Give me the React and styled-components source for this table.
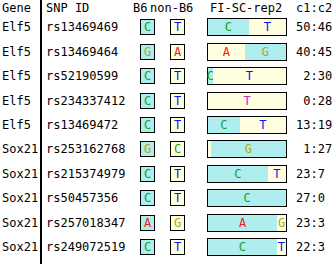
import React from 'react';
import styled, { createGlobalStyle } from 'styled-components';

const Global = createGlobalStyle`
  html, body {
    margin: 0;
    padding: 0;
    background: #ffffff;
  }
  body {
    font-family: 'DejaVu Sans Mono', 'Liberation Mono', monospace;
    font-size: 12px;
    color: #000000;
    overflow: hidden;
  }
`;

const B6_FILL = '#afeeee';
const ALT_FILL = '#ffffe0';

const BASE_COLORS = {
  A: '#ee1c24',
  C: '#16a016',
  G: '#b4a414',
  T: '#1010f0',
};

const Table = styled.div`
  display: flex;
  flex-direction: column;
  width: 332px;
  height: 264px;
  overflow: hidden;
`;

const Row = styled.div`
  display: flex;
  align-items: center;
  flex: none;
  height: ${(p) => p.$h}px;
  white-space: pre;
`;

const Filler = styled.div`
  display: flex;
  flex: 1;
`;

const GeneCell = styled.div`
  display: flex;
  align-items: center;
  align-self: stretch;
  flex: none;
  width: 38px;
  padding-left: 2px;
  border-right: 2px solid #000000;
`;

const Cell = styled.div`
  display: flex;
  align-items: center;
  flex: ${(p) => (p.$w ? 'none' : '1')};
  width: ${(p) => (p.$w ? `${p.$w}px` : 'auto')};
  padding-left: ${(p) => p.$pl || 0}px;
`;

const Box = styled.div`
  display: flex;
  align-items: center;
  justify-content: center;
  box-sizing: border-box;
  width: 15px;
  height: 16px;
  border: 1px solid #000000;
  background: ${(p) => p.$fill};
  color: ${(p) => BASE_COLORS[p.$base]};
`;

const Bar = styled.div`
  display: flex;
  box-sizing: border-box;
  width: 80px;
  height: 18px;
  border: 1px solid #000000;
`;

const Segment = styled.div`
  display: flex;
  align-items: center;
  justify-content: center;
  flex: none;
  background: ${(p) => p.$fill};
  color: ${(p) => p.$color};
`;

const rows = [
  { gene: 'Elf5', snp: 'rs13469469', b6: 'C', alt: 'T', c1: 50, c2: 46 },
  { gene: 'Elf5', snp: 'rs13469464', b6: 'G', alt: 'A', c1: 40, c2: 45 },
  { gene: 'Elf5', snp: 'rs52190599', b6: 'C', alt: 'T', c1: 2, c2: 30 },
  { gene: 'Elf5', snp: 'rs234337412', b6: 'C', alt: 'T', c1: 0, c2: 28, tint: '#c030c8' },
  { gene: 'Elf5', snp: 'rs13469472', b6: 'C', alt: 'T', c1: 13, c2: 19 },
  { gene: 'Sox21', snp: 'rs253162768', b6: 'G', alt: 'C', c1: 1, c2: 27 },
  { gene: 'Sox21', snp: 'rs215374979', b6: 'C', alt: 'T', c1: 23, c2: 7 },
  { gene: 'Sox21', snp: 'rs50457356', b6: 'C', alt: 'T', c1: 27, c2: 0 },
  { gene: 'Sox21', snp: 'rs257018347', b6: 'A', alt: 'G', c1: 23, c2: 3 },
  { gene: 'Sox21', snp: 'rs249072519', b6: 'C', alt: 'T', c1: 22, c2: 3 },
];

function ReadBar({ item }) {
  // left segment is the allele that sorts first, coloured by whether it is B6
  const [left, right] = [item.b6, item.alt].sort();
  const total = item.c1 + item.c2 || 1;
  const parts = [
    { base: left, count: item.c1 },
    { base: right, count: item.c2 },
  ];
  return (
    <Bar>
      {parts.map((p, i) => (
        <Segment
          key={i}
          $fill={p.base === item.b6 ? B6_FILL : ALT_FILL}
          $color={item.tint || BASE_COLORS[p.base]}
          style={{ width: `${(p.count / total) * 100}%` }}
        >
          {p.count > 1 ? p.base : ''}
        </Segment>
      ))}
    </Bar>
  );
}

export default function App() {
  return (
    <>
      <Global />
      <Table>
        <Row $h={15}>
          <GeneCell>Gene</GeneCell>
          <Cell $w={87} $pl={4}>SNP ID</Cell>
          <Cell $w={17}>B6</Cell>
          <Cell $w={60}>non-B6</Cell>
          <Cell $w={86}>FI-SC-rep2</Cell>
          <Cell>c1:c2</Cell>
        </Row>
        {rows.map((r) => (
          <Row key={r.snp} $h={24.44}>
            <GeneCell>{r.gene}</GeneCell>
            <Cell $w={94} $pl={4}>{r.snp}</Cell>
            <Cell $w={30}>
              <Box $fill={B6_FILL} $base={r.b6}>{r.b6}</Box>
            </Cell>
            <Cell $w={37}>
              <Box $fill={ALT_FILL} $base={r.alt}>{r.alt}</Box>
            </Cell>
            <Cell $w={89}>
              <ReadBar item={r} />
            </Cell>
            <Cell>{String(r.c1).padStart(2, ' ') + ':' + r.c2}</Cell>
          </Row>
        ))}
        <Filler>
          <GeneCell />
        </Filler>
      </Table>
    </>
  );
}
